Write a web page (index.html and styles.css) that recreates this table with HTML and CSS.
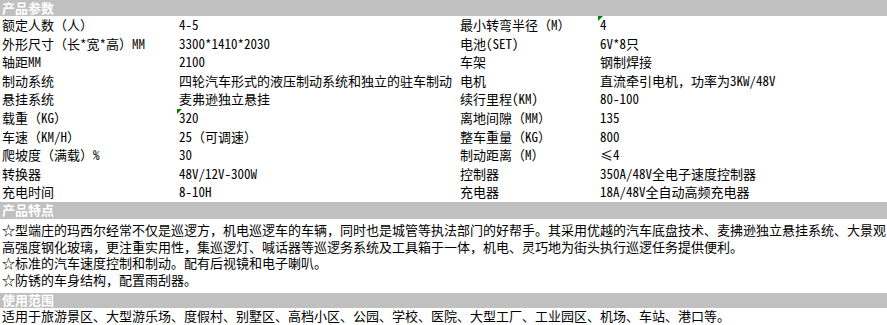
FILE: index.html
```html
<!DOCTYPE html>
<html lang="zh-CN">
<head>
<meta charset="utf-8">
<title>产品参数</title>
<link rel="stylesheet" href="styles.css">
</head>
<body>
<div class="page">
  <div class="bar bar-top">产品参数</div>
  <div class="specs">
    <div class="cell">额定人数（人）</div><div class="cell">4-5</div><div class="cell">最小转弯半径（M）</div><div class="cell flag">4</div>
    <div class="cell">外形尺寸（长*宽*高）MM</div><div class="cell">3300*1410*2030</div><div class="cell">电池(SET)</div><div class="cell">6V*8只</div>
    <div class="cell">轴距MM</div><div class="cell">2100</div><div class="cell">车架</div><div class="cell">钢制焊接</div>
    <div class="cell">制动系统</div><div class="cell">四轮汽车形式的液压制动系统和独立的驻车制动</div><div class="cell">电机</div><div class="cell">直流牵引电机，功率为3KW/48V</div>
    <div class="cell">悬挂系统</div><div class="cell">麦弗逊独立悬挂</div><div class="cell">续行里程(KM)</div><div class="cell">80-100</div>
    <div class="cell">载重（KG）</div><div class="cell flag">320</div><div class="cell">离地间隙（MM）</div><div class="cell">135</div>
    <div class="cell">车速（KM/H）</div><div class="cell">25（可调速）</div><div class="cell">整车重量（KG）</div><div class="cell">800</div>
    <div class="cell">爬坡度（满载）%</div><div class="cell">30</div><div class="cell">制动距离（M）</div><div class="cell">≤4</div>
    <div class="cell">转换器</div><div class="cell">48V/12V-300W</div><div class="cell">控制器</div><div class="cell">350A/48V全电子速度控制器</div>
    <div class="cell">充电时间</div><div class="cell">8-10H</div><div class="cell">充电器</div><div class="cell">18A/48V全自动高频充电器</div>
  </div>
  <div class="bar bar-mid">产品特点</div>
  <div class="features">
    <div class="line">☆型端庄的玛西尔经常不仅是巡逻方，机电巡逻车的车辆，同时也是城管等执法部门的好帮手。其采用优越的汽车底盘技术、麦拂逊独立悬挂系统、大景观</div>
    <div class="line">高强度钢化玻璃，更注重实用性，集巡逻灯、喊话器等巡逻务系统及工具箱于一体，机电、灵巧地为街头执行巡逻任务提供便利。</div>
    <div class="line">☆标准的汽车速度控制和制动。配有后视镜和电子喇叭。</div>
    <div class="line">☆防锈的车身结构，配置雨刮器。</div>
  </div>
  <div class="bar bar-low">使用范围</div>
  <div class="usage">适用于旅游景区、大型游乐场、度假村、别墅区、高档小区、公园、学校、医院、大型工厂、工业园区、机场、车站、港口等。</div>
</div>
</body>
</html>
```
FILE: styles.css
```css
html, body {
  margin: 0;
  padding: 0;
  background: #ffffff;
}

.page {
  width: 887px;
  font-family: "Noto Sans Mono CJK SC", "Noto Sans CJK SC", sans-serif;
  font-size: 13px;
  color: #000000;
  overflow: hidden;
}

.bar,
.features,
.usage {
  font-family: "Liberation Sans", "Noto Sans Mono CJK SC", "Noto Sans CJK SC", sans-serif;
}

.bar {
  background: #c0c0c0;
  color: #ffffff;
  font-weight: bold;
  font-size: 13px;
  padding-left: 2px;
  white-space: nowrap;
}

.bar-top {
  height: 16px;
  line-height: 17px;
}

.bar-mid {
  height: 17px;
  line-height: 18px;
}

.bar-low {
  height: 15px;
  line-height: 16px;
}

.specs {
  display: grid;
  grid-template-columns: 177px 281px 140px 1fr;
  grid-auto-rows: 18.6px;
}

.cell {
  position: relative;
  padding-left: 2px;
  line-height: 18.6px;
  white-space: nowrap;
  overflow: hidden;
}

.flag::before {
  content: "";
  position: absolute;
  left: 0;
  top: 0;
  width: 0;
  height: 0;
  border-top: 5px solid #008000;
  border-right: 5px solid transparent;
}

.features {
  padding: 4px 0 3px 2px;
}

.line {
  line-height: 16.7px;
  white-space: nowrap;
}

.usage {
  padding-left: 2px;
  line-height: 18px;
  white-space: nowrap;
}
```
